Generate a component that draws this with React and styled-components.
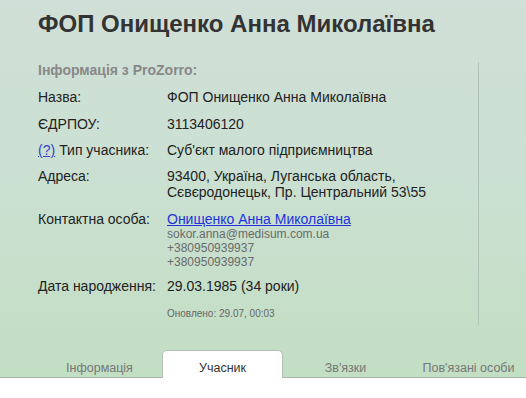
import React from "react";
import styled, { createGlobalStyle } from "styled-components";

const Global = createGlobalStyle`
  html, body { margin: 0; padding: 0; background: #fff; }
  body { font-family: "Liberation Sans", Arial, sans-serif; }
`;

const Page = styled.div`
  width: 526px;
  height: 398px;
  overflow: hidden;
  display: flex;
  flex-direction: column;
  background: #fff;
`;

const Band = styled.div`
  height: 378px;
  display: flex;
  flex-direction: column;
  background: linear-gradient(180deg, #d0dfd7 0%, #cbe0d2 45%, #c2dec3 100%);
  border-bottom: 1px solid #a9b5aa;
  box-sizing: border-box;
`;

const Title = styled.h1`
  margin: 0;
  padding: 10px 0 0 38px;
  font-size: 24px;
  line-height: 28px;
  font-weight: bold;
  color: #333;
`;

const Body = styled.div`
  margin-top: 24px;
  display: flex;
`;

const InfoPanel = styled.div`
  width: 479px;
  height: 263px;
  box-sizing: border-box;
  padding-left: 38px;
  border-right: 1px solid #b3c2b7;
`;

const SectionLabel = styled.div`
  font-size: 14px;
  line-height: 16px;
  font-weight: bold;
  color: #888;
  margin-bottom: 11px;
`;

const Grid = styled.div`
  display: grid;
  grid-template-columns: 129px 1fr;
  row-gap: 10px;
  font-size: 14px;
  line-height: 16px;
  color: #222;
`;

const Label = styled.div`
  line-height: ${(p) => (p.$big ? "18px" : "16px")};
  white-space: nowrap;
  margin-top: ${(p) => p.$mt || 0}px;
`;

const Value = styled.div`
  line-height: ${(p) => (p.$big ? "18px" : "16px")};
  margin-top: ${(p) => p.$mt || 0}px;
`;

const Help = styled.a`
  color: #3344cc;
  text-decoration: underline;
  margin-right: 4px;
`;

const Link = styled.a`
  color: #2233dd;
  text-decoration: underline;
  display: block;
`;

const Small = styled.div`
  font-size: 12px;
  line-height: 14px;
  color: #6a6a6a;
`;

const Updated = styled.div`
  grid-column: 2;
  font-size: 10px;
  line-height: 12px;
  color: #666;
  margin-top: 3px;
`;

const Tabs = styled.div`
  margin-top: auto;
  display: flex;
  gap: 2px;
  padding-left: 39px;
`;

const Tab = styled.div`
  width: 121px;
  flex-shrink: 0;
  box-sizing: border-box;
  text-align: center;
  font-size: 12.5px;
  line-height: 16px;
  padding-top: 9px;
  color: ${(p) => (p.$active ? "#333" : "#777")};
  background: ${(p) => (p.$active ? "#fff" : "transparent")};
  border: 1px solid ${(p) => (p.$active ? "#b7beb8" : "transparent")};
  border-bottom: none;
  border-radius: 5px 5px 0 0;
  margin-bottom: ${(p) => (p.$active ? "-1px" : "0")};
  height: ${(p) => (p.$active ? "28px" : "27px")};
  white-space: nowrap;
`;

export default function App() {
  return (
    <Page>
      <Global />
      <Band>
        <Title>ФОП Онищенко Анна Миколаївна</Title>
        <Body>
          <InfoPanel>
            <SectionLabel>Інформація з ProZorro:</SectionLabel>
            <Grid>
              <Label>Назва:</Label>
              <Value>ФОП Онищенко Анна Миколаївна</Value>
              <Label $mt={1}>ЄДРПОУ:</Label>
              <Value $mt={1}>3113406120</Value>
              <Label>
                <Help href="#">(?)</Help>Тип учасника:
              </Label>
              <Value>Суб'єкт малого підприємництва</Value>
              <Label>Адреса:</Label>
              <Value>
                93400, Україна, Луганська область,
                <br />
                Сєвєродонецьк, Пр. Центральний 53\55
              </Value>
              <Label $mt={1}>Контактна особа:</Label>
              <Value $mt={1}>
                <Link href="#">Онищенко Анна Миколаївна</Link>
                <Small>sokor.anna@medisum.com.ua</Small>
                <Small>+380950939937</Small>
                <Small>+380950939937</Small>
              </Value>
              <Label $big $mt={-2}>Дата народження:</Label>
              <Value $big $mt={-2}>29.03.1985 (34 роки)</Value>
              <Updated>Оновлено: 29.07, 00:03</Updated>
            </Grid>
          </InfoPanel>
        </Body>
        <Tabs>
          <Tab>Інформація</Tab>
          <Tab $active>Учасник</Tab>
          <Tab>Зв'язки</Tab>
          <Tab>Пов'язані особи</Tab>
        </Tabs>
      </Band>
    </Page>
  );
}
